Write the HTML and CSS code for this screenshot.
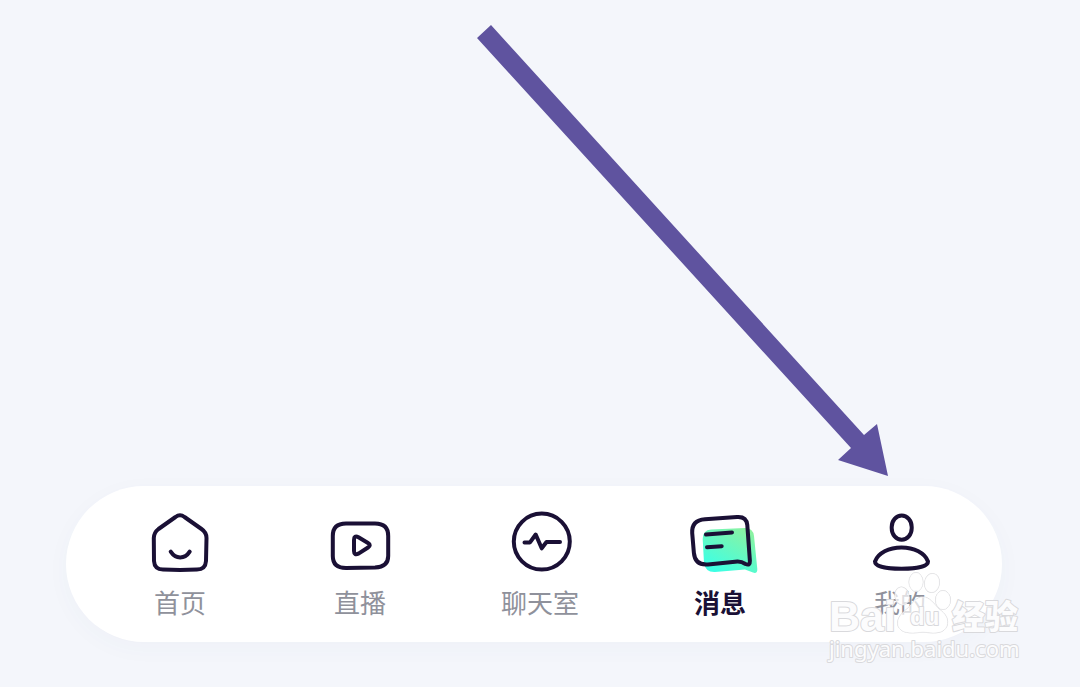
FILE: index.html
```html
<!DOCTYPE html>
<html lang="zh-Hans">
<head>
    <meta charset="UTF-8">
    <meta name="viewport" content="width=device-width, initial-scale=1.0">
    <title>消息</title>
    <link rel="stylesheet" href="styles.css">
</head>
<body>

    <main class="content"></main>

    <!-- 底部导航 -->
    <nav class="tab-bar">
        <a class="tab" href="#home">
            <svg class="tab-icon" viewBox="0 0 72 68" aria-hidden="true">
                <path d="M31.5 9 Q36 5.5 40.500 9 L57.5 21 Q62.5 24.5 62.5 30 L62 53 Q61.5 61.5 53 61.5 Q36 62.3 19 61.5 Q10.5 61.5 10 53 L9.8 30 Q10 24.5 14.5 21 Z"/>
                <path d="M26.7 43.7 Q30.5 49.5 36.2 49.5 Q42 49.5 45.7 43.7"/>
            </svg>
            <span class="tab-label">首页</span>
        </a>
        <a class="tab" href="#live">
            <svg class="tab-icon" viewBox="0 0 72 68" aria-hidden="true">
                <path d="M22 15.6 H51 Q64.2 15.6 64.2 28 V48 Q64.2 59 51 59.6 L22 60 Q8.8 60 8.8 48 V28 Q8.8 15.6 22 15.6 Z"/>
                <path d="M30 32 Q30 27 34.5 29.3 L44 35 Q47.5 37.2 44 39.5 L34.5 45.6 Q30 47.5 30 43 Z"/>
            </svg>
            <span class="tab-label">直播</span>
        </a>
        <a class="tab" href="#chat">
            <svg class="tab-icon" viewBox="0 0 72 68" aria-hidden="true">
                <circle cx="37.8" cy="33.6" r="28"/>
                <path d="M20.5 34.4 H26 L31.7 26.5 L37.7 40.3 L42.5 34 H56"/>
            </svg>
            <span class="tab-label">聊天室</span>
        </a>
        <a class="tab active" href="#message" aria-current="page">
            <svg class="tab-icon" viewBox="0 0 72 68" aria-hidden="true">
                <defs>
                    <linearGradient id="bubble" x1="0.1" y1="1" x2="0.8" y2="0">
                        <stop offset="0.1" stop-color="#3dffe4"/>
                        <stop offset="1" stop-color="#8df2a0"/>
                    </linearGradient>
                </defs>
                <path class="bubble-fill" d="M27 21.5 L61 20 Q69 20 70 28 L73.3 61 Q73.5 66 69 64.6 L61 61.5 L31 64 Q21.5 64.5 20 55 L18.7 31 Q18.7 22 27 21.5 Z"/>
                <path d="M21 11.2 L53 9 Q62.500 8.3 63.3 17 L65.9 53 Q66.2 58 61.5 56 Q57.5 53.5 53.5 53.6 L24 56.4 Q11 57.5 9.9 45 L8.2 25 Q7.5 12.2 21 11.2 Z"/>
                <path d="M22 26.6 L48 24.5 M23 39.2 L37.7 38.2"/>
            </svg>
            <span class="tab-label">消息</span>
        </a>
        <a class="tab" href="#mine">
            <svg class="tab-icon" viewBox="0 0 72 68" aria-hidden="true">
                <rect x="27.7" y="7.5" width="20" height="24.3" rx="10" ry="11.5"/>
                <path d="M11 53.5 C14 45 25 39.5 37.500 39.5 C50 39.5 61 45 64 53.5 C64 58.5 53 60.8 37.5 60.8 C22 60.8 11 58.5 11 53.5 Z"/>
            </svg>
            <span class="tab-label">我的</span>
        </a>
    </nav>

    <!-- 指向“我的”的箭头 -->
    <svg class="arrow" viewBox="0 0 412 452" aria-hidden="true">
        <path d="M14 0 L387 410 L400 399 L411 451 L361 435 L374 423 L0 13 Z"/>
    </svg>

    <!-- 水印 -->
    <svg class="watermark" viewBox="0 0 200 100" role="img" aria-label="Baidu 经验 jingyan.baidu.com">
        <text class="mark-brand" x="4" y="65">Bai</text>
        <g class="mark-paw">
            <ellipse cx="77" cy="30" rx="7" ry="9" transform="rotate(-12 77 30)"/>
            <ellipse cx="91" cy="16" rx="7" ry="9.5"/>
            <ellipse cx="107" cy="17" rx="7.5" ry="9.5" transform="rotate(8 107 17)"/>
            <ellipse cx="118" cy="34" rx="7.5" ry="9.5"/>
            <path d="M98 31 C105 31 109 38 114 43 C121 48 124 53 122 60 C119 67 112 68 98 66 C84 68 76 67 73 60 C71 52 77 47 83 42 C88 37 91 31 98 31 Z"/>
        </g>
        <text class="mark-du" x="85" y="59">du</text>
        <text class="mark-cn" x="127" y="63">经验</text>
        <text class="mark-url" x="4" y="91">jingyan.baidu.com</text>
    </svg>

</body>
</html>
```

FILE: styles.css
```css
body {
    margin: 0;
    min-height: 100vh;
    display: flex;
    flex-direction: column;
    position: relative;
    background-color: #f4f6fb;
    font-family: "Noto Sans CJK SC", "Noto Sans", sans-serif;
    color: #8f919b;
}
.content {
    flex: 1;
}
.tab-bar {
    display: flex;
    margin: 0 78px 45px 66px;
    padding: 22px 12px 22px 24px;
    border-radius: 78px;
    background-color: #ffffff;
    box-shadow: 0 6px 24px rgba(60, 80, 130, 0.03);
}
.tab {
    flex: 1;
    display: flex;
    flex-direction: column;
    align-items: center;
    gap: 8px;
    color: inherit;
    text-decoration: none;
}
.tab-icon {
    width: 72px;
    height: 68px;
    overflow: visible;
    fill: none;
    stroke: #1a1035;
    stroke-width: 4;
    stroke-linecap: round;
    stroke-linejoin: round;
}
.tab-icon .bubble-fill {
    fill: url(#bubble);
    stroke: none;
}
.tab-label {
    font-size: 26px;
    line-height: 36px;
}
.active .tab-label {
    color: #1a1035;
    font-weight: 700;
}
.arrow {
    position: absolute;
    left: 477px;
    top: 25px;
    width: 412px;
    height: 452px;
    fill: #5f539f;
}
/* 水印盖在导航上面 */
.watermark {
    position: absolute;
    right: 55px;
    bottom: 21px;
    width: 200px;
    height: 100px;
    fill: #fcfcfd;
    stroke: #d9d9dc;
    stroke-width: 2;
    stroke-linejoin: round;
    paint-order: stroke;
    overflow: visible;
    pointer-events: none;
}
.mark-brand {
    font: bold 43px "Liberation Sans", sans-serif;
}
.mark-paw {
    fill: rgba(255, 255, 255, 0.7);
    stroke-width: 1;
}
.mark-du {
    font: bold 24px "Liberation Sans", sans-serif;
}
.mark-cn {
    font: 900 33px "Noto Sans CJK SC", sans-serif;
}
.mark-url {
    font: 22px "Noto Sans", sans-serif;
}
```
